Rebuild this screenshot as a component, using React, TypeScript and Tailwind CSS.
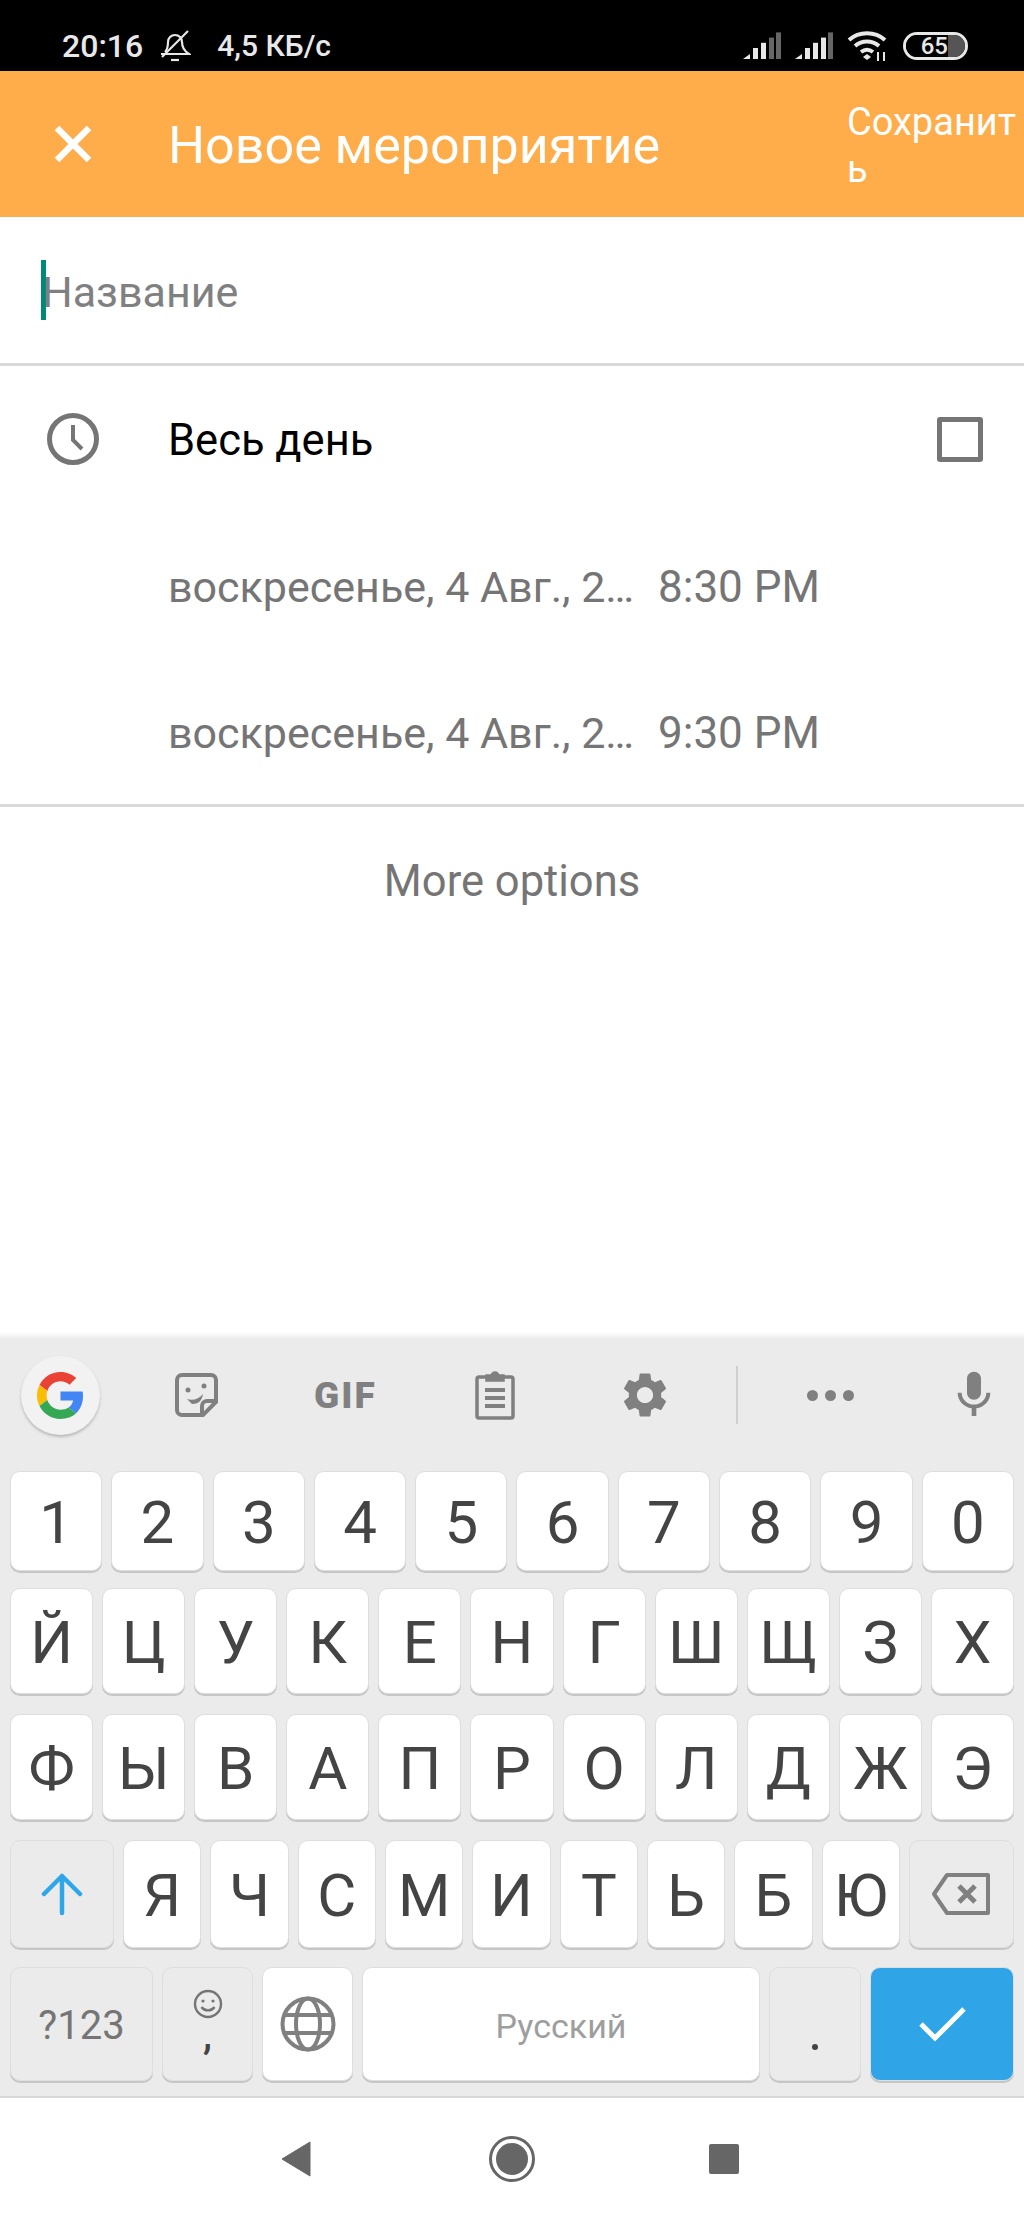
import React from 'react';

const FONT = { fontFamily: 'Roboto, sans-serif' };

const Key: React.FC<{ className?: string; children?: React.ReactNode }> = ({ className = 'flex-1 bg-white pt-[3px] text-[60px] text-[#444444]', children }) => (
  <div className={`flex items-center justify-center rounded-[10px] border border-[#dedede] shadow-[0_2px_0_#c6c6c6] leading-none ${className}`}>
    {children}
  </div>
);

const LetterRow: React.FC<{ keys: string[]; className: string }> = ({ keys, className }) => (
  <div className={`flex gap-[9px] ${className}`}>
    {keys.map(k => <Key key={k}>{k}</Key>)}
  </div>
);

const Signal: React.FC<{ dim: number }> = ({ dim }) => (
  <svg width="38" height="28" viewBox="0 0 38 28">
    <path d="M0 27l7-5v5z" fill="#e8e8e8" />
    {[10, 18, 26, 33].map((x, i) => (
      <rect key={x} x={x} y={16 - i * 5.2} width="5" height={11 + i * 5.2} fill={i >= 4 - dim ? '#666' : '#e8e8e8'} />
    ))}
  </svg>
);

const StatusBar = () => (
  <div className="flex h-[71px] items-center bg-black pl-[62px] pr-[56px] pt-[20px] text-[#e8e8e8]">
    <span className="text-[32px] font-medium leading-none">20:16</span>
    <svg className="ml-[16px]" width="32" height="34" viewBox="0 0 32 34" fill="none" stroke="#e8e8e8" strokeWidth="2.2">
      <path d="M6 23c2-2 3-5 3-10 0-4 3-7 7-7s7 3 7 7c0 5 2 9 7 12H2" />
      <path d="M3 28L29 2" />
      <path d="M12 31h8" />
    </svg>
    <span className="ml-[26px] text-[30px] font-medium leading-none">4,5 КБ/с</span>
    <div className="ml-auto flex items-center">
      <Signal dim={2} />
      <div className="ml-[14px]"><Signal dim={1} /></div>
      <svg className="ml-[14px]" width="42" height="30" viewBox="0 0 42 30" fill="none" stroke="#e8e8e8" strokeWidth="4">
        <path d="M2 9c10-9 26-9 36 0" />
        <path d="M8 15c7-6 17-6 24 0" />
        <path d="M14 21c4-3 8-3 12 0" />
        <path d="M16 26l4-3 4 3-4 3z" fill="#e8e8e8" stroke="none" />
        <path d="M31 21v9M37 21v9" strokeWidth="2" />
      </svg>
      <div className="ml-[14px] flex h-[28px] w-[65px] items-center overflow-hidden rounded-full border-[3px] border-[#e8e8e8]">
        <div className="flex h-full w-[42px] items-center justify-end bg-black text-[24px] font-medium">65</div>
        <div className="h-full flex-1 bg-[#555555]" />
      </div>
    </div>
  </div>
);

const Header = () => (
  <div className="flex h-[146px] items-center bg-[#ffad4a] text-white">
    <svg className="ml-[54px] shrink-0" width="38" height="38" viewBox="0 0 38 38" stroke="white" strokeWidth="6.5">
      <path d="M3 3l32 32M35 3L3 35" />
    </svg>
    <span className="ml-[76px] pt-[4px] text-[52px] leading-none">Новое мероприятие</span>
    <span className="ml-auto w-[177px] break-all pt-[4px] text-[38px] leading-[47px]">Сохранить</span>
  </div>
);

const Form = () => (
  <div className="flex-1 bg-white">
    <div className="flex h-[146px] items-center pl-[41px]">
      <div className="h-[60px] w-[5px] bg-[#00897b]" />
      <span className="-ml-[4px] pt-[5px] text-[43px] leading-none text-[#808080]">Название</span>
    </div>
    <div className="h-[3px] bg-[#d9d9d9]" />
    <div className="flex h-[146px] items-center pl-[47px] pr-[41px]">
      <svg width="52" height="52" viewBox="0 0 52 52" fill="none" stroke="#757575" strokeWidth="5">
        <circle cx="26" cy="26" r="23.5" />
        <path d="M26 12v15l9 9" strokeWidth="4" />
      </svg>
      <span className="ml-[69px] pt-[4px] text-[43.500px] leading-none text-black">Весь день</span>
      <div className="ml-auto h-[45px] w-[46px] rounded-[3px] border-[5px] border-[#757575]" />
    </div>
    {['8:30 PM', '9:30 PM'].map(time => (
      <div key={time} className="flex h-[146px] items-center pl-[168px] pt-[4px] text-[43px] leading-none text-[#757575]">
        <span className="w-[490px] whitespace-nowrap">воскресенье, 4 Авг., 2…</span>
        <span className="text-[44px]">{time}</span>
      </div>
    ))}
    <div className="h-[3px] bg-[#d9d9d9]" />
    <div className="flex h-[146px] items-center justify-center pt-[4px] text-[43.500px] leading-none text-[#757575]">More options</div>
  </div>
);

const Toolbar = () => (
  <div className="flex h-[133px] items-center bg-[#ebebeb] pb-[19px] pl-[21px]">
    <div className="flex h-[79px] w-[79px] items-center justify-center rounded-full bg-[#f2f2f2] shadow-[0_2px_3px_#b8b8b8]">
      <svg width="47" height="47" viewBox="0 0 48 48">
        <path fill="#EA4335" d="M24 9.5c3.54 0 6.71 1.22 9.21 3.6l6.85-6.85C35.9 2.38 30.47 0 24 0 14.62 0 6.51 5.38 2.56 13.22l7.98 6.19C12.43 13.72 17.74 9.5 24 9.5z" />
        <path fill="#4285F4" d="M46.98 24.55c0-1.57-.15-3.09-.38-4.55H24v9.02h12.94c-.58 2.96-2.26 5.48-4.78 7.18l7.73 6c4.51-4.18 7.09-10.36 7.09-17.65z" />
        <path fill="#FBBC05" d="M10.53 28.59c-.48-1.45-.76-2.99-.76-4.59s.27-3.14.76-4.59l-7.98-6.19C.92 16.46 0 20.12 0 24c0 3.88.92 7.54 2.56 10.78l7.97-6.19z" />
        <path fill="#34A853" d="M24 48c6.48 0 11.93-2.13 15.89-5.81l-7.73-6c-2.15 1.45-4.92 2.3-8.16 2.3-6.26 0-11.57-4.22-13.47-9.91l-7.98 6.19C6.51 42.62 14.62 48 24 48z" />
      </svg>
    </div>
    <svg className="ml-[75px]" width="43" height="44" viewBox="0 0 43 44" fill="none" stroke="#808080" strokeWidth="4">
      <path d="M7 2h29a5 5 0 0 1 5 5v22L28 42H7a5 5 0 0 1-5-5V7a5 5 0 0 1 5-5z" />
      <path d="M40 28h-8a5 5 0 0 0-5 5v8" />
      <circle cx="13" cy="17" r="2.5" fill="#808080" stroke="none" />
      <circle cx="29" cy="13" r="2.5" fill="#808080" stroke="none" />
      <path d="M12 26c6 2 12 0 16-5-1 7-5 10-11 10z" fill="#808080" stroke="none" />
    </svg>
    <span className="ml-[96px] w-[61px] whitespace-nowrap text-center text-[37px] font-black leading-none tracking-[2px] text-[#808080]">GIF</span>
    <svg className="ml-[100px]" width="40" height="50" viewBox="0 0 40 50" fill="none" stroke="#808080" strokeWidth="3.5">
      <path d="M12 7H4a2 2 0 0 0-2 2v37a2 2 0 0 0 2 2h32a2 2 0 0 0 2-2V9a2 2 0 0 0-2-2h-8" />
      <path d="M12 10V6h5a3 3 0 0 1 6 0h5v4z" fill="#808080" />
      <path d="M10 20h20M10 28h20M10 36h20" strokeWidth="4" />
    </svg>
    <svg className="ml-[103px]" width="54" height="54" viewBox="0 0 24 24" fill="#808080">
      <path d="M19.14,12.94c.04-.3.06-.61.06-.94 0-.32-.02-.64-.07-.94l2.03-1.58a.49.49 0 0 0 .12-.61l-1.92-3.32a.488.488 0 0 0-.59-.22l-2.39.96c-.5-.38-1.03-.7-1.62-.94l-.36-2.54a.484.484 0 0 0-.48-.41h-3.84c-.24 0-.43.17-.47.41l-.36 2.54c-.59.24-1.13.57-1.62.94l-2.39-.96c-.22-.08-.47 0-.59.22L2.74 8.87c-.12.21-.08.47.12.61l2.03 1.58c-.05.3-.09.63-.09.94s.02.64.07.94l-2.03 1.58a.49.49 0 0 0-.12.61l1.92 3.32c.12.22.37.29.59.22l2.39-.96c.5.38 1.03.7 1.62.94l.36 2.54c.05.24.24.41.48.41h3.84c.24 0 .44-.17.47-.41l.36-2.54c.59-.24 1.13-.56 1.62-.94l2.39.96c.22.08.47 0 .59-.22l1.92-3.32c.12-.22.07-.47-.12-.61l-2.01-1.58zM12 15.6c-1.98 0-3.6-1.62-3.6-3.6s1.62-3.6 3.6-3.6 3.6 1.62 3.6 3.6-1.62 3.6-3.6 3.6z" />
    </svg>
    <div className="ml-[64px] h-[58px] w-[2px] bg-[#cfcfcf]" />
    <div className="ml-[69px] flex gap-[7px]">
      <div className="h-[11px] w-[11px] rounded-full bg-[#808080]" />
      <div className="h-[11px] w-[11px] rounded-full bg-[#808080]" />
      <div className="h-[11px] w-[11px] rounded-full bg-[#808080]" />
    </div>
    <svg className="ml-[92px]" width="56" height="56" viewBox="0 0 24 24" fill="#808080">
      <path d="M12 14c1.66 0 2.99-1.34 2.99-3L15 5c0-1.66-1.34-3-3-3S9 3.34 9 5v6c0 1.66 1.34 3 3 3zm5.3-3c0 3-2.54 5.1-5.3 5.1S6.7 14 6.7 11H5c0 3.41 2.72 6.23 6 6.72V21h2v-3.28c3.28-.48 6-3.3 6-6.72h-1.7z" />
    </svg>
  </div>
);

const Keyboard = () => (
  <div className="flex h-[760px] flex-col border-b-[2px] border-[#d8d8d8] bg-[#ebebeb]">
    <Toolbar />
    <div className="flex flex-col px-[10px]">
      <LetterRow className="mb-[17px] h-[100px]" keys={['1', '2', '3', '4', '5', '6', '7', '8', '9', '0']} />
      <LetterRow className="mb-[20px] h-[106px]" keys={['Й', 'Ц', 'У', 'К', 'Е', 'Н', 'Г', 'Ш', 'Щ', 'З', 'Х']} />
      <LetterRow className="mb-[20px] h-[106px]" keys={['Ф', 'Ы', 'В', 'А', 'П', 'Р', 'О', 'Л', 'Д', 'Ж', 'Э']} />
      <div className="mb-[19px] flex h-[108px] gap-[9px]">
        <Key className="w-[104px] shrink-0 bg-[#ebebeb]">
          <svg width="42" height="44" viewBox="0 0 42 44" fill="none" stroke="#2ea6e8" strokeWidth="4.5" strokeLinecap="round" strokeLinejoin="round">
            <path d="M21 41V4M3 22L21 4l18 18" />
          </svg>
        </Key>
        {['Я', 'Ч', 'С', 'М', 'И', 'Т', 'Ь', 'Б', 'Ю'].map(k => <Key key={k}>{k}</Key>)}
        <Key className="w-[105px] shrink-0 bg-[#ebebeb]">
          <svg width="60" height="42" viewBox="0 0 60 42" fill="none" stroke="#808080" strokeWidth="4">
            <path d="M16 2h41v38H16L3 21z" strokeLinejoin="round" />
            <path d="M28 13l16 16M44 13L28 29" strokeWidth="5" />
          </svg>
        </Key>
      </div>
      <div className="flex h-[114px] gap-[9px]">
        <Key className="w-[143px] shrink-0 bg-[#ebebeb] pt-[3px] text-[40px] text-[#757575]">?123</Key>
        <Key className="w-[91px] shrink-0 flex-col bg-[#ebebeb] text-[40px] text-[#444444]">
          <svg width="30" height="30" viewBox="0 0 30 30" fill="none" stroke="#757575" strokeWidth="2.4">
            <circle cx="15" cy="15" r="13" />
            <circle cx="10" cy="12" r="1.6" fill="#757575" stroke="none" />
            <circle cx="20" cy="12" r="1.6" fill="#757575" stroke="none" />
            <path d="M8.5 18c3 4.500 10 4.500 13 0" />
          </svg>
          <span className="mt-[2px] h-[38px] font-medium leading-[30px]">,</span>
        </Key>
        <Key className="w-[91px] shrink-0 bg-white">
          <svg width="56" height="56" viewBox="0 0 56 56" fill="none" stroke="#808080" strokeWidth="4">
            <circle cx="28" cy="28" r="25.500" />
            <ellipse cx="28" cy="28" rx="12" ry="25.500" />
            <path d="M5 19h46M5 37h46" />
          </svg>
        </Key>
        <Key className="flex-1 bg-white pt-[3px] text-[34px] text-[#9e9e9e]">Русский</Key>
        <Key className="w-[92px] shrink-0 items-end bg-[#ebebeb] pb-[30px]">
          <div className="h-[6px] w-[6px] rounded-full bg-[#444444]" />
        </Key>
        <Key className="w-[144px] shrink-0 border-[#2fa5e8] bg-[#2fa5e8]">
          <svg width="48" height="36" viewBox="0 0 48 36" fill="none" stroke="white" strokeWidth="5">
            <path d="M3 18l14 14L46 3" />
          </svg>
        </Key>
      </div>
    </div>
  </div>
);

const NavBar = () => (
  <div className="flex h-[121px] items-center bg-white pl-[281px]">
    <svg width="30" height="36" viewBox="0 0 30 36">
      <path d="M1 18L29 1v34z" fill="#666666" stroke="#666666" strokeLinejoin="round" />
    </svg>
    <svg className="ml-[178px]" width="46" height="46" viewBox="0 0 46 46">
      <circle cx="23" cy="23" r="21.500" fill="none" stroke="#666666" strokeWidth="3" />
      <circle cx="23" cy="23" r="16" fill="#666666" />
    </svg>
    <div className="ml-[174px] h-[30px] w-[30px] rounded-[2px] bg-[#666666]" />
  </div>
);

export default function App() {
  return (
    <div className="flex h-[2219px] w-[1024px] flex-col overflow-hidden bg-white" style={FONT}>
      <StatusBar />
      <Header />
      <Form />
      <div className="h-[6px] bg-gradient-to-b from-white to-[#f0f0f0]" />
      <Keyboard />
      <NavBar />
    </div>
  );
}
